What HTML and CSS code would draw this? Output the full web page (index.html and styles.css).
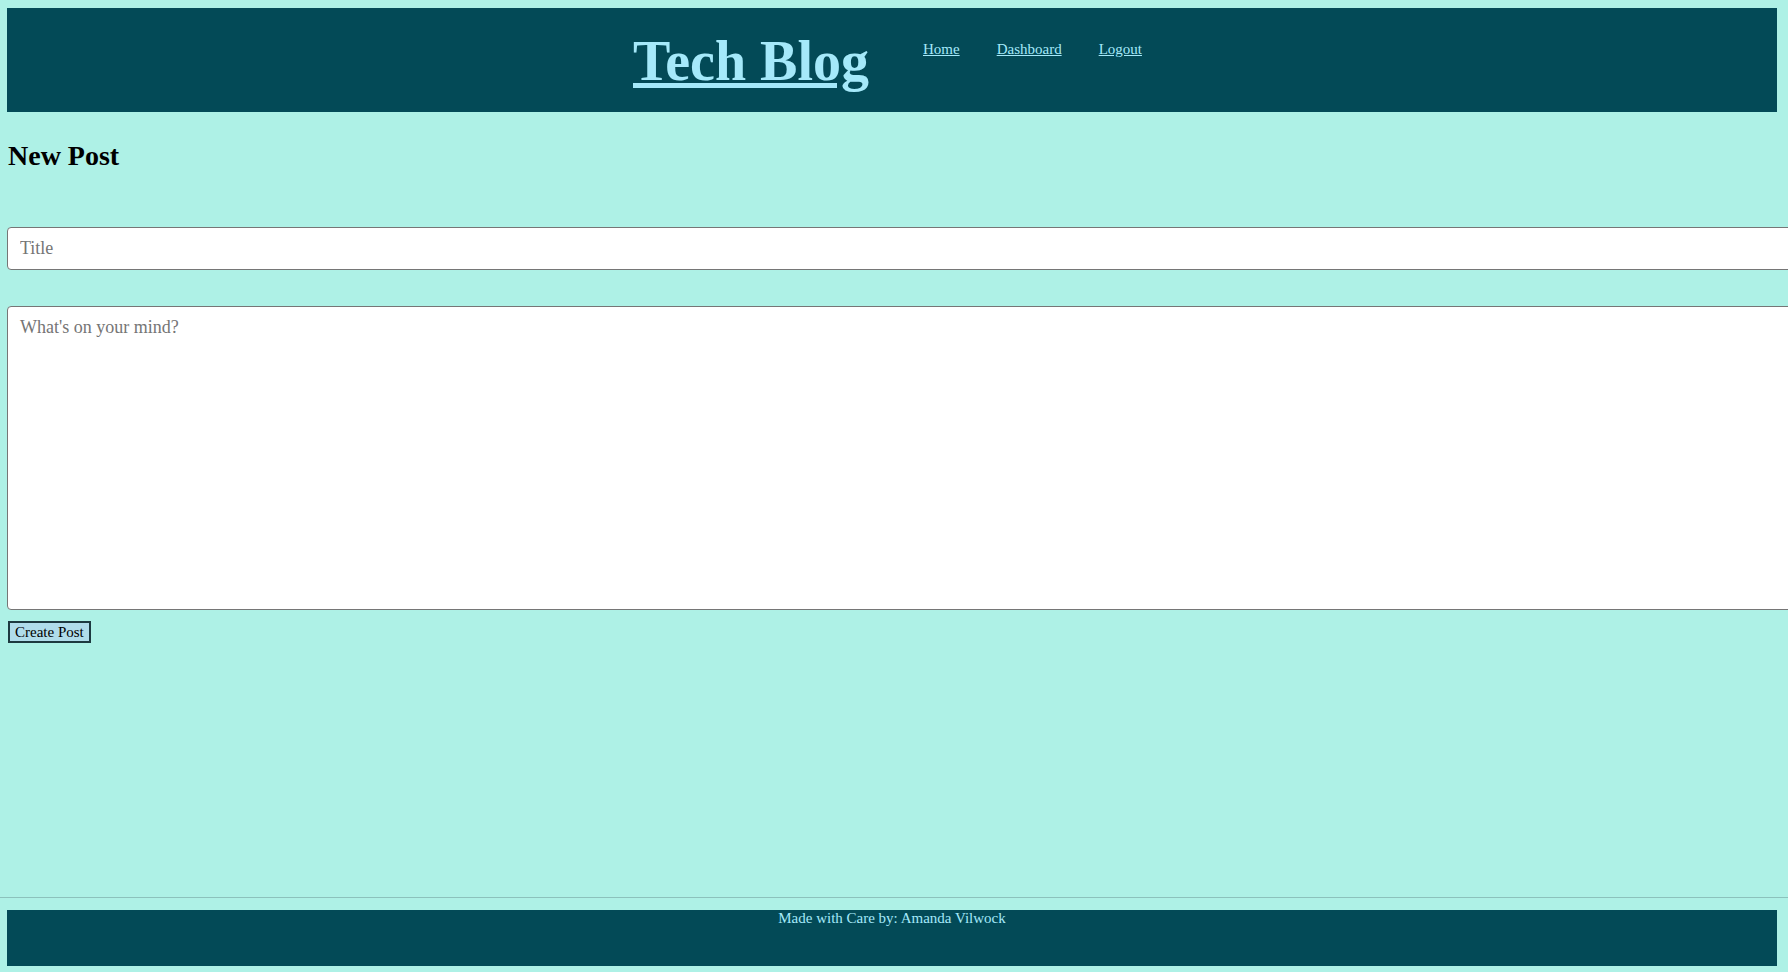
FILE: index.html
```html
<!DOCTYPE html>
<html lang="en">
<head>
<meta charset="utf-8">
<title>Tech Blog</title>
<link rel="stylesheet" href="styles.css">
</head>
<body>
  <header class="site-header">
    <h1 class="brand"><a href="#">Tech Blog</a></h1>
    <nav class="nav">
      <a href="#">Home</a>
      <a href="#">Dashboard</a>
      <a href="#">Logout</a>
    </nav>
  </header>
  <main class="content">
    <h2 class="page-title">New Post</h2>
    <form class="post-form">
      <input class="field field-title" type="text" placeholder="Title">
      <textarea class="field field-body" placeholder="What's on your mind?"></textarea>
      <button class="btn" type="button">Create Post</button>
    </form>
  </main>
  <div class="divider"></div>
  <footer class="site-footer">Made with Care by: Amanda Vilwock</footer>
</body>
</html>
```

FILE: styles.css
```css
html {
  overflow: hidden;
}

body {
  margin: 0;
  min-height: 972px;
  display: flex;
  flex-direction: column;
  background: #aef1e6;
  font-family: "Liberation Serif", "Times New Roman", serif;
  color: #000;
}

.site-header {
  margin: 8px 11px 0 7px;
  padding-right: 9px;
  height: 104px;
  background: #034a57;
  display: flex;
  justify-content: center;
  align-items: flex-start;
  gap: 54px;
}

.brand {
  margin: 25px 0 0;
  font-size: 56px;
  line-height: 56px;
  font-weight: bold;
}

.brand a {
  color: #a5e9fa;
}

.nav {
  margin-top: 33px;
  display: flex;
  gap: 37px;
  font-size: 15px;
  line-height: 17px;
}

.nav a {
  color: #a5e9fa;
}

.content {
  flex: 1;
  padding-left: 7px;
  overflow: hidden;
}

.page-title {
  margin: 28px 0 0 1px;
  font-size: 28px;
  line-height: 32px;
  font-weight: bold;
}

.post-form {
  margin-top: 55px;
  display: flex;
  flex-direction: column;
  align-items: flex-start;
}

.field {
  box-sizing: border-box;
  width: calc(100% + 40px);
  border: 1px solid #767676;
  border-radius: 4px;
  background: #fff;
  font-family: "Liberation Serif", "Times New Roman", serif;
  font-size: 18px;
  color: #000;
  padding: 0 12px;
  margin: 0;
  outline: none;
}

.field::placeholder {
  color: #757575;
}

.field-title {
  height: 43px;
}

.field-body {
  margin-top: 36px;
  height: 304px;
  padding-top: 10px;
  resize: none;
  display: block;
}

.btn {
  margin: 11px 0 0 1px;
  height: 22px;
  padding: 0 5px;
  font-family: "Liberation Serif", "Times New Roman", serif;
  font-size: 15px;
  line-height: 18px;
  color: #000;
  background: #b0dcea;
  border: 2px solid #1d3a40;
  border-radius: 0;
}

.divider {
  border-top: 1px solid #8cc2bc;
}

.site-footer {
  margin: 12px 11px 6px 7px;
  height: 56px;
  background: #034a57;
  color: #a5e9fa;
  text-align: center;
  font-size: 15px;
  line-height: 17px;
}
```
